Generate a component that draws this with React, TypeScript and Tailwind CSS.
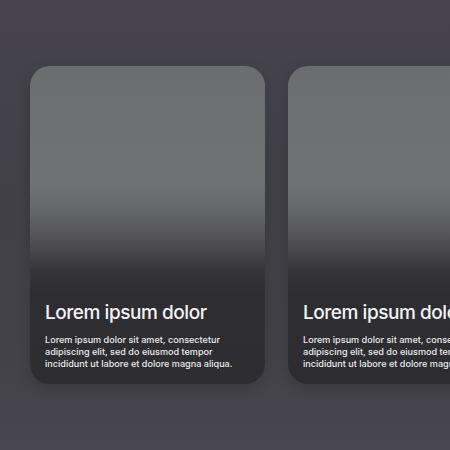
import React from "react";

function Card() {
  return (
    <div className="relative w-[235px] h-[318px] shrink-0 rounded-[20px] overflow-hidden shadow-[0_4px_14px_rgba(0,0,0,0.18)] bg-[linear-gradient(180deg,#6c6d71_0%,#717276_36%,#636468_47%,#4b4a4f_57%,#343338_65%,#2e2d32_72%,#2d2c31_100%)] flex flex-col justify-end px-[15px] pb-[14px]">
      <h2 className="text-[19px] leading-[24px] font-medium text-[#f4f4f5] tracking-[-0.45px] whitespace-nowrap mb-[9px]">
        Lorem ipsum dolor
      </h2>
      <p className="text-[9.1px] leading-[12px] font-medium text-[#ececee] whitespace-nowrap">
        Lorem ipsum dolor sit amet, consectetur
        <br />
        adipiscing elit, sed do eiusmod tempor
        <br />
        incididunt ut labore et dolore magna aliqua.
      </p>
    </div>
  );
}

export default function App() {
  return (
    <div
      className="w-[450px] h-[450px] overflow-hidden bg-[linear-gradient(180deg,#46434d_0%,#414047_45%,#434249_80%,#48464f_100%)] pt-[66px] pl-[30px] flex gap-[23px]"
      style={{ fontFamily: "Inter, 'Noto Sans', sans-serif" }}
    >
      <Card />
      <Card />
    </div>
  );
}
